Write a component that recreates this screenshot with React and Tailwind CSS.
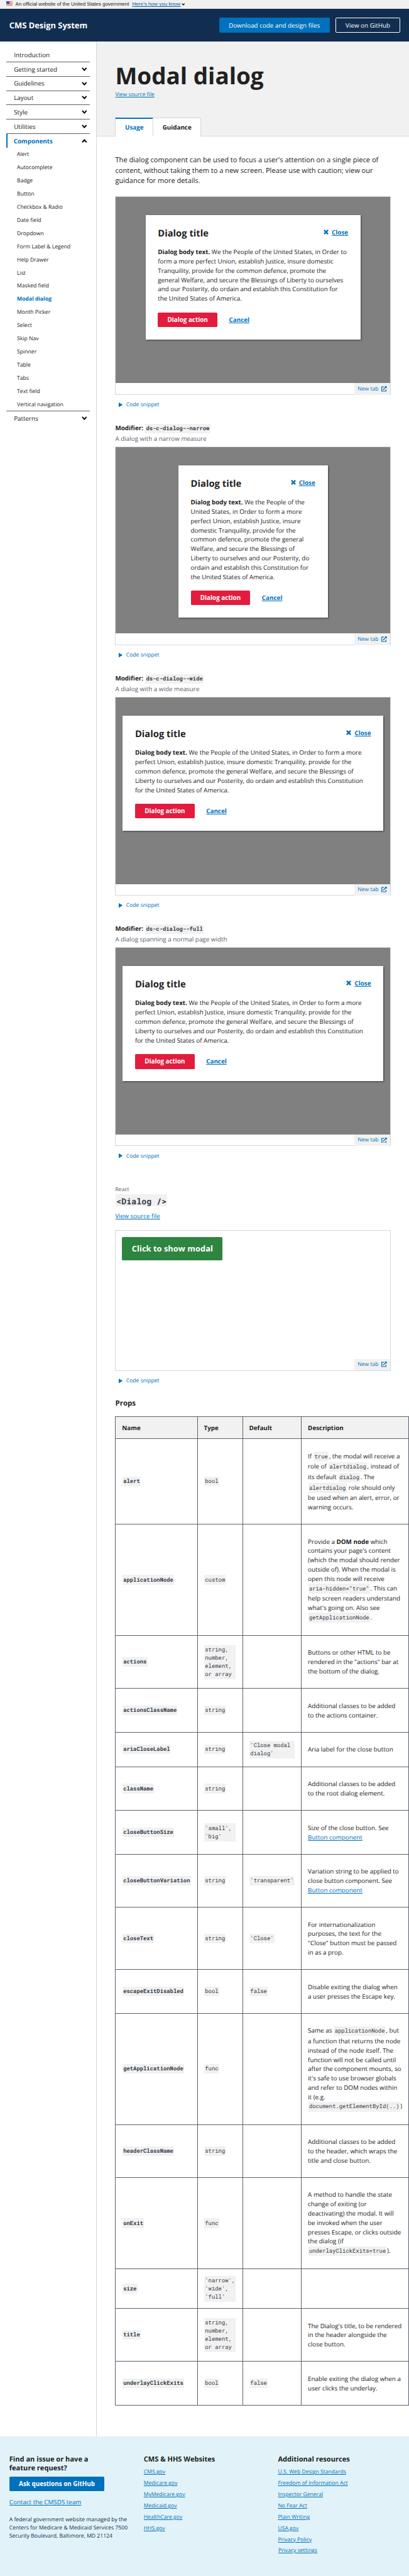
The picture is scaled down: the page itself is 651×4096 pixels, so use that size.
const LINK = "text-[#0071bc] underline underline-offset-2";

function Chevron({ up, className = "h-[10px] w-[14px]" }) {
  return (
    <svg viewBox="0 0 14 10" className={className} fill="none" stroke="#000" strokeWidth="3.2">
      <path d={up ? "M1.5 8.5 L7 2.5 L12.5 8.5" : "M1.5 1.5 L7 7.5 L12.5 1.5"} />
    </svg>
  );
}

function Flag() {
  return (
    <svg viewBox="0 0 16 11" className="h-[11px] w-[16px]">
      <rect width="16" height="11" fill="#fff" />
      <path d="M0 .6H16M0 3H16M0 5.5H16M0 8H16M0 10.4H16" stroke="#db3e1f" strokeWidth="1.2" />
      <rect width="8" height="7" fill="#1e33b1" />
      <path d="M1 1.6H7M1 3.5H7M1 5.4H7" stroke="#fff" strokeWidth=".7" strokeDasharray="1 1" />
    </svg>
  );
}

function Code({ children, bold }) {
  return (
    <code
      className={
        "m-px inline-block bg-[#f1f1f1] px-0.5 pt-[3.8px] pb-[0.2px] font-['Roboto_Mono','Liberation_Mono',monospace] text-[14.4px] leading-[21px] text-[#323a45] " +
        (bold ? "font-bold" : "font-normal")
      }
    >
      {children}
    </code>
  );
}

function Banner() {
  return (
    <div className="flex h-[22px] items-center bg-[#f0f0f0] px-4 font-['Liberation_Sans',sans-serif] text-[13px] leading-[18px] text-[#1b1b1b]">
      <div className="-mt-[3px]">
        <Flag />
      </div>
      <span className="ml-2 whitespace-nowrap">An official website of the United States government</span>
      <a className="ml-2 tracking-[0.1px] whitespace-nowrap text-[#005ea2] underline underline-offset-2">
        Here’s how you know
      </a>
      <Chevron className="ml-[2px] h-[6px] w-[9px]" />
    </div>
  );
}

function Header() {
  return (
    <header className="flex h-[86px] items-center justify-between bg-[#112e51] px-6 text-white">
      <span className="text-[21px] font-bold whitespace-nowrap">CMS Design System</span>
      <div className="flex gap-4">
        <a className="flex h-[38px] w-[286px] items-center justify-center rounded-[3px] bg-[#0071bc] whitespace-nowrap">
          Download code and design files
        </a>
        <a className="flex h-[38px] w-[166px] items-center justify-center rounded-[3px] border border-white whitespace-nowrap">
          View on GitHub
        </a>
      </div>
    </header>
  );
}

const SECTIONS = ["Getting started", "Guidelines", "Layout", "Style", "Utilities"];
const COMPONENTS = [
  "Alert", "Autocomplete", "Badge", "Button", "Checkbox & Radio", "Date field", "Dropdown",
  "Form Label & Legend", "Help Drawer", "List", "Masked field", "Modal dialog", "Month Picker",
  "Select", "Skip Nav", "Spinner", "Table", "Tabs", "Text field", "Vertical navigation",
];

function Sidebar() {
  return (
    <nav className="w-[250px] shrink-0 border-r border-[#d6d7d9] px-4 pt-4">
      <div className="flex h-[37px] items-center border-b border-[#5b616b] px-5">Introduction</div>
      {SECTIONS.map((s) => (
        <div key={s} className="flex h-[37px] items-center justify-between border-b border-[#5b616b] pr-2 pl-5">
          {s}
          <Chevron />
        </div>
      ))}
      <div className="flex h-[36px] items-center justify-between border-l-4 border-[#0071bc] pr-2 pl-4 font-bold text-[#0071bc]">
        Components
        <Chevron up />
      </div>
      <ul className="h-[681px] border-b border-[#5b616b] text-[14px]">
        {COMPONENTS.map((c) => (
          <li
            key={c}
            className={"flex h-[34px] items-center pl-7 " + (c === "Modal dialog" ? "font-bold text-[#0071bc]" : "")}
          >
            {c}
          </li>
        ))}
      </ul>
      <div className="flex h-[36px] items-center justify-between pr-2 pl-5">
        Patterns
        <Chevron />
      </div>
    </nav>
  );
}

function PageTitle() {
  return (
    <div className="flex h-[245px] flex-col border-b border-[#d6d7d9] bg-[#f1f1f1] px-12 pt-12">
      <h1 className="h-[78px] text-[60px] leading-[78px] font-bold">Modal dialog</h1>
      <div className="h-[21px] text-[14px] leading-[21px]">
        <a className={LINK}>View source file</a>
      </div>
      <div className="-mb-px mt-12 flex h-[50px] font-bold">
        <div className="flex w-[97px] items-center justify-center border-t-4 border-l border-t-[#0071bc] border-l-[#d6d7d9] bg-white text-[#0071bc]">
          Usage
        </div>
        <div className="flex h-[49px] w-[125px] items-center justify-center border border-b-0 border-[#d6d7d9] bg-white">
          Guidance
        </div>
      </div>
    </div>
  );
}

function NewTab() {
  return (
    <div className="flex h-[30px] justify-end">
      <a className="flex w-[92px] items-center justify-between bg-[#f1f1f1] px-2 text-[14px] whitespace-nowrap text-[#0071bc]">
        New tab
        <svg viewBox="0 0 14 14" className="h-[14px] w-[14px]" fill="none" stroke="#0071bc" strokeWidth="2">
          <path d="M6.5 2H1V13H12V8" />
          <path d="M4.5 9.5L11 3" strokeWidth="2.2" />
          <path d="M8 0H14V6Z" fill="#0071bc" stroke="none" />
        </svg>
      </a>
    </div>
  );
}

function CodeSnippet() {
  return (
    <div className="mt-[15px] flex h-[21px] items-center pl-[9px] text-[14px] leading-[21px] text-[#0071bc]">
      <svg viewBox="0 0 10 12" className="mr-[9px] h-[12px] w-[10px]">
        <path d="M0 0L10 6L0 12Z" fill="#0071bc" />
      </svg>
      Code snippet
    </div>
  );
}

function DialogExample({ width, lines }) {
  return (
    <>
      <div className="h-[514px] border border-[#d6d7d9]">
        <div className="flex h-[482px] items-start justify-center bg-[#808080] pt-12">
          <div className={"bg-white p-8 shadow-[2px_2px_4px_rgba(0,0,0,0.5)] " + width}>
            <div className="flex h-[31px] items-start justify-between">
              <h2 className="text-[24px] leading-[31px] font-bold">Dialog title</h2>
              <a className="flex items-center font-bold text-[#0071bc]">
                <svg viewBox="0 0 13 13" className="mr-2 h-[13px] w-[13px]" fill="none" stroke="#0071bc" strokeWidth="4">
                  <path d="M1.5 1.5L11.5 11.5M11.5 1.5L1.5 11.5" />
                </svg>
                <span className="underline underline-offset-2">Close</span>
              </a>
            </div>
            <p className="mt-5 whitespace-nowrap">
              <b>Dialog body text.</b>{" "}
              {lines.map((l) => (
                <span key={l}>
                  {l}
                  <br />
                </span>
              ))}
            </p>
            <div className="mt-6 flex h-[38px] items-center font-bold">
              <button className="h-[38px] w-[154px] rounded-[3px] bg-[#e31c3d] text-white">Dialog action</button>
              <a className={"ml-[30px] " + LINK}>Cancel</a>
            </div>
          </div>
        </div>
        <NewTab />
      </div>
      <CodeSnippet />
    </>
  );
}

const WIDE_LINES = [
  "We the People of the United States, in Order to form a more",
  "perfect Union, establish Justice, insure domestic Tranquility, provide for the",
  "common defence, promote the general Welfare, and secure the Blessings of",
  "Liberty to ourselves and our Posterity, do ordain and establish this Constitution",
  "for the United States of America.",
];

function Modifier({ name, text }) {
  return (
    <div className="mt-[37px] h-[59.6px]">
      <div className="h-[27px] font-bold whitespace-nowrap">
        Modifier: <Code bold>{name}</Code>
      </div>
      <div className="text-[#5b616b]">{text}</div>
    </div>
  );
}

const ELEMENT_TYPE = "string, number, element, or array";
const ROWS = [
  { h: "h-[221px]", name: "alert", type: "bool", desc: <>If <Code>true</Code>, the modal will receive a<br />role of <Code>alertdialog</Code>, instead of<br />its default <Code>dialog</Code>. The<br /><Code>alertdialog</Code> role should only<br />be used when an alert, error, or<br />warning occurs.</> },
  { h: "h-[287px]", name: "applicationNode", type: "custom", desc: <>Provide a <b>DOM node</b> which<br />contains your page's content<br />(which the modal should render<br />outside of). When the modal is<br />open this node will receive<br /><Code>aria-hidden="true"</Code>. This can<br />help screen readers understand<br />what's going on. Also see<br /><Code>getApplicationNode</Code>.</> },
  { h: "h-[137px]", name: "actions", type: ELEMENT_TYPE, desc: <>Buttons or other HTML to be<br />rendered in the "actions" bar at<br />the bottom of the dialog.</> },
  { h: "h-[113px]", name: "actionsClassName", type: "string", desc: <>Additional classes to be added<br />to the actions container.</> },
  { h: "h-[89px]", name: "ariaCloseLabel", type: "string", def: "'Close modal dialog'", desc: "Aria label for the close button" },
  { h: "h-[113px]", name: "className", type: "string", desc: <>Additional classes to be added<br />to the root dialog element.</> },
  { h: "h-[113px]", name: "closeButtonSize", type: "'small', 'big'", desc: <>Size of the close button. See<br /><a className={LINK}>Button component</a></> },
  { h: "h-[137px]", name: "closeButtonVariation", type: "string", def: "'transparent'", desc: <>Variation string to be applied to<br />close button component. See<br /><a className={LINK}>Button component</a></> },
  { h: "h-[161px]", name: "closeText", type: "string", def: "'Close'", desc: <>For internationalization<br />purposes, the text for the<br />"Close" button must be passed<br />in as a prop.</> },
  { h: "h-[113px]", name: "escapeExitDisabled", type: "bool", def: "false", desc: <>Disable exiting the dialog when<br />a user presses the Escape key.</> },
  { h: "h-[287px]", name: "getApplicationNode", type: "func", desc: <>Same as <Code>applicationNode</Code>, but<br />a function that returns the node<br />instead of the node itself. The<br />function will not be called until<br />after the component mounts, so<br />it's safe to use browser globals<br />and refer to DOM nodes within<br />it (e.g.<br /><Code>document.getElementById(..)</Code>)</> },
  { h: "h-[137px]", name: "headerClassName", type: "string", desc: <>Additional classes to be added<br />to the header, which wraps the<br />title and close button.</> },
  { h: "h-[236px]", name: "onExit", type: "func", desc: <>A method to handle the state<br />change of exiting (or<br />deactivating) the modal. It will<br />be invoked when the user<br />presses Escape, or clicks outside<br />the dialog (if<br /><Code>underlayClickExits=true</Code>).</> },
  { h: "h-[102px]", name: "size", type: "'narrow', 'wide', 'full'" },
  { h: "h-[137px]", name: "title", type: ELEMENT_TYPE, desc: <>The Dialog's title, to be rendered<br />in the header alongside the<br />close button.</> },
  { h: "h-[113px]", name: "underlayClickExits", type: "bool", def: "false", desc: <>Enable exiting the dialog when a<br />user clicks the underlay.</> },
];

const CELL = "flex items-center border-r border-b border-[#5b616b] pr-4";
const ROW = "grid grid-cols-[213px_117px_152px_277px] ";

function PropsTable() {
  return (
    <div className="w-[759px] border-t border-[#5b616b]">
      <div className={ROW + "h-[57px] bg-[#f1f1f1] font-bold"}>
        <div className={CELL + " border-l pl-4"}>Name</div>
        <div className={CELL + " pl-4"}>Type</div>
        <div className={CELL + " pl-4"}>Default</div>
        <div className={CELL + " pl-4"}>Description</div>
      </div>
      {ROWS.map((r) => (
        <div key={r.name} className={ROW + r.h}>
          <div className={CELL + " border-l pl-4"}>
            <div><Code bold>{r.name}</Code></div>
          </div>
          <div className={CELL + " pl-4"}>
            <div><Code>{r.type}</Code></div>
          </div>
          <div className={CELL + " pl-4"}>{r.def && <div><Code>{r.def}</Code></div>}</div>
          <div className={CELL + " pl-4 whitespace-nowrap"}>
            <div>{r.desc}</div>
          </div>
        </div>
      ))}
    </div>
  );
}

function Main() {
  return (
    <main className="w-[808px] shrink-0">
      <PageTitle />
      <div className="h-[5939px] pt-12 pl-12">
        <div className="w-[712px]">
          <p className="mb-6 h-[81px] text-[18px] leading-[27px] whitespace-nowrap">
            The dialog component can be used to focus a user's attention on a single piece of
            <br />
            content, without taking them to a new screen. Please use with caution; view our
            <br />
            guidance for more details.
          </p>
          <DialogExample
            width="w-[556px]"
            lines={[
              "We the People of the United States, in Order to",
              "form a more perfect Union, establish Justice, insure domestic",
              "Tranquility, provide for the common defence, promote the",
              "general Welfare, and secure the Blessings of Liberty to ourselves",
              "and our Posterity, do ordain and establish this Constitution for",
              "the United States of America.",
            ]}
          />
          <Modifier name="ds-c-dialog--narrow" text="A dialog with a narrow measure" />
          <DialogExample
            width="w-[386px]"
            lines={[
              "We the People of the",
              "United States, in Order to form a more",
              "perfect Union, establish Justice, insure",
              "domestic Tranquility, provide for the",
              "common defence, promote the general",
              "Welfare, and secure the Blessings of",
              "Liberty to ourselves and our Posterity, do",
              "ordain and establish this Constitution for",
              "the United States of America.",
            ]}
          />
          <Modifier name="ds-c-dialog--wide" text="A dialog with a wide measure" />
          <DialogExample width="w-[674px]" lines={WIDE_LINES} />
          <Modifier name="ds-c-dialog--full" text="A dialog spanning a normal page width" />
          <DialogExample width="w-[674px]" lines={WIDE_LINES} />

          <div className="mt-[65px] h-[21px] text-[14px] leading-[21px] text-[#5b616b]">React</div>
          <div className="flex h-[47px] items-start pt-[2px] pl-px">
            <code className="bg-[#f1f1f1] px-[2px] pt-[5px] pb-0 font-['Roboto_Mono','Liberation_Mono',monospace] text-[21.6px] leading-[27px] font-bold whitespace-nowrap text-[#323a45]">
              {"<Dialog />"}
            </code>
          </div>
          <div className="h-[48px]">
            <a className={LINK}>View source file</a>
          </div>
          <div className="flex h-[364px] flex-col justify-between border border-[#d6d7d9]">
            <button className="mt-4 ml-4 h-[61px] w-[260px] rounded-[3px] bg-[#2e8540] text-[21px] font-bold whitespace-nowrap text-white">
              Click to show modal
            </button>
            <NewTab />
          </div>
          <CodeSnippet />
          <h3 className="mt-[37px] h-[44px] text-[18.7px] leading-[24px] font-bold">Props</h3>
          <PropsTable />
        </div>
      </div>
    </main>
  );
}

const SITES = ["CMS.gov", "Medicare.gov", "MyMedicare.gov", "Medicaid.gov", "HealthCare.gov", "HHS.gov"];
const RESOURCES = [
  "U.S. Web Design Standards", "Freedom of Information Act", "Inspector General", "No Fear Act",
  "Plain Writing", "USA.gov", "Privacy Policy", "Privacy settings",
];

function LinkColumn({ title, items }) {
  return (
    <div className="w-[347px] shrink-0">
      <h4 className="text-[18px] leading-[23.4px] font-bold">{title}</h4>
      <ul className="mt-[6px] text-[14px]">
        {items.map((i) => (
          <li key={i} className={"flex h-[29px] items-center " + (i === "Privacy settings" ? "pl-px" : "")}>
            <a className={LINK}>{i}</a>
          </li>
        ))}
      </ul>
    </div>
  );
}

function Footer() {
  return (
    <footer className="flex h-[361px] bg-[#e1f3f8] pt-12 pl-6">
      <div className="w-[347.5px] shrink-0 whitespace-nowrap">
        <h4 className="h-[55px] text-[18px] leading-[23.4px] font-bold">
          Find an issue or have a<br />feature request?
        </h4>
        <button className="block h-[38px] w-[246px] rounded-[3px] bg-[#0071bc] font-bold text-white">
          Ask questions on GitHub
        </button>
        <div className="mt-4">
          <a className={LINK}>Contact the CMSDS team</a>
        </div>
        <p className="mt-6 text-[14px] leading-[21px] text-[#112e51]">
          A federal government website managed by the
          <br />
          Centers for Medicare &amp; Medicaid Services 7500
          <br />
          Security Boulevard, Baltimore, MD 21124
        </p>
      </div>
      <LinkColumn title="CMS & HHS Websites" items={SITES} />
      <LinkColumn title="Additional resources" items={RESOURCES} />
    </footer>
  );
}

export default function App() {
  return (
    <div className="h-[4096px] w-full overflow-hidden">
      <div className="w-[1058px] overflow-hidden bg-white font-['Open_Sans',sans-serif] text-[16px] leading-[24px] text-[#212121] [text-rendering:geometricPrecision] [zoom:0.61575]">
        <Banner />
        <Header />
        <div className="flex h-[6184px]">
          <Sidebar />
          <Main />
        </div>
        <Footer />
      </div>
    </div>
  );
}
